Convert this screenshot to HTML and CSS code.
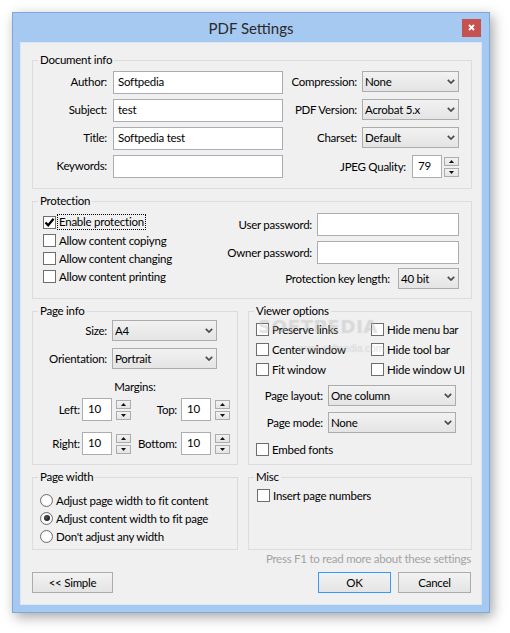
FILE: index.html
```html
<!DOCTYPE html>
<html>
<head>
<meta charset="utf-8">
<title>PDF Settings</title>
<link rel="stylesheet" href="styles.css">
</head>
<body>
<div class="window">
  <div class="titlebar">
    <span class="title">PDF Settings</span>
    <span class="close"><svg width="7" height="7" viewBox="0 0 7 7"><path d="M1 1 L6 6 M6 1 L1 6" stroke="#fff" stroke-width="1.8" fill="none"/></svg></span>
  </div>
  <div class="client">
    <fieldset class="group">
      <legend>Document info</legend>
      <div class="doc-grid">
        <span class="lbl">Author:</span>
        <div class="input">Softpedia</div>
        <span class="lbl lbl-r">Compression:</span>
        <div class="combo"><span>None</span><svg class="arrow" width="8" height="5" viewBox="0 0 8 5"><path d="M0.8 0.8 L4 4 L7.2 0.8" stroke="#4a4a4a" stroke-width="1.7" fill="none"/></svg></div>

        <span class="lbl">Subject:</span>
        <div class="input">test</div>
        <span class="lbl lbl-r">PDF Version:</span>
        <div class="combo"><span>Acrobat 5.x</span><svg class="arrow" width="8" height="5" viewBox="0 0 8 5"><path d="M0.8 0.8 L4 4 L7.2 0.8" stroke="#4a4a4a" stroke-width="1.7" fill="none"/></svg></div>

        <span class="lbl">Title:</span>
        <div class="input">Softpedia test</div>
        <span class="lbl lbl-r">Charset:</span>
        <div class="combo"><span>Default</span><svg class="arrow" width="8" height="5" viewBox="0 0 8 5"><path d="M0.8 0.8 L4 4 L7.2 0.8" stroke="#4a4a4a" stroke-width="1.7" fill="none"/></svg></div>

        <span class="lbl">Keywords:</span>
        <div class="input"></div>
        <div class="jpeg">
          <span class="jpeg-lbl">JPEG Quality:</span>
          <div class="input num">79</div>
          <div class="spin">
            <span class="sb"><svg width="5" height="3" viewBox="0 0 5 3"><path d="M0 3 L2.5 0 L5 3 Z" fill="#111"/></svg></span>
            <span class="sb"><svg width="5" height="3" viewBox="0 0 5 3"><path d="M0 0 L5 0 L2.5 3 Z" fill="#111"/></svg></span>
          </div>
        </div>
      </div>
    </fieldset>

    <fieldset class="group gap4">
      <legend>Protection</legend>
      <div class="prot-body">
        <div class="checks">
          <div class="crow"><span class="cb"><svg width="11" height="11" viewBox="0 0 11 11"><path d="M1.5 5.5 L4.2 8.3 L9.6 1.8" stroke="#000" stroke-width="2.2" fill="none"/></svg></span><span class="ctext focus">Enable protection</span></div>
          <div class="crow"><span class="cb"></span><span class="ctext">Allow content copiyng</span></div>
          <div class="crow"><span class="cb"></span><span class="ctext">Allow content changing</span></div>
          <div class="crow"><span class="cb"></span><span class="ctext">Allow content printing</span></div>
        </div>
        <div class="pw">
          <div class="pw-row"><span class="pw-lbl">User password:</span><div class="input pwin"></div></div>
          <div class="pw-row"><span class="pw-lbl">Owner password:</span><div class="input pwin"></div></div>
          <div class="pw-row key"><span class="key-lbl">Protection key length:</span><div class="combo keycombo"><span>40 bit</span><svg class="arrow" width="8" height="5" viewBox="0 0 8 5"><path d="M0.8 0.8 L4 4 L7.2 0.8" stroke="#4a4a4a" stroke-width="1.7" fill="none"/></svg></div></div>
        </div>
      </div>
    </fieldset>

    <div class="row gap4">
      <fieldset class="group pageinfo">
        <legend>Page info</legend>
        <div class="pi-body">
          <div class="pi-grid">
            <span class="lbl pi-lbl">Size:</span>
            <div class="combo"><span>A4</span><svg class="arrow" width="8" height="5" viewBox="0 0 8 5"><path d="M0.8 0.8 L4 4 L7.2 0.8" stroke="#4a4a4a" stroke-width="1.7" fill="none"/></svg></div>
            <span class="lbl pi-lbl">Orientation:</span>
            <div class="combo"><span>Portrait</span><svg class="arrow" width="8" height="5" viewBox="0 0 8 5"><path d="M0.8 0.8 L4 4 L7.2 0.8" stroke="#4a4a4a" stroke-width="1.7" fill="none"/></svg></div>
          </div>
          <div class="margins-title">Margins:</div>
          <div class="mg">
            <span class="mg-lbl">Left:</span>
            <div class="input num">10</div>
            <div class="spin mg-spin">
              <span class="sb"><svg width="5" height="3" viewBox="0 0 5 3"><path d="M0 3 L2.5 0 L5 3 Z" fill="#111"/></svg></span>
              <span class="sb"><svg width="5" height="3" viewBox="0 0 5 3"><path d="M0 0 L5 0 L2.5 3 Z" fill="#111"/></svg></span>
            </div>
            <span class="mg-lbl mg-lbl2">Top:</span>
            <div class="input num">10</div>
            <div class="spin mg-spin">
              <span class="sb"><svg width="5" height="3" viewBox="0 0 5 3"><path d="M0 3 L2.5 0 L5 3 Z" fill="#111"/></svg></span>
              <span class="sb"><svg width="5" height="3" viewBox="0 0 5 3"><path d="M0 0 L5 0 L2.5 3 Z" fill="#111"/></svg></span>
            </div>

            <span class="mg-lbl">Right:</span>
            <div class="input num">10</div>
            <div class="spin mg-spin">
              <span class="sb"><svg width="5" height="3" viewBox="0 0 5 3"><path d="M0 3 L2.5 0 L5 3 Z" fill="#111"/></svg></span>
              <span class="sb"><svg width="5" height="3" viewBox="0 0 5 3"><path d="M0 0 L5 0 L2.5 3 Z" fill="#111"/></svg></span>
            </div>
            <span class="mg-lbl mg-lbl2">Bottom:</span>
            <div class="input num">10</div>
            <div class="spin mg-spin">
              <span class="sb"><svg width="5" height="3" viewBox="0 0 5 3"><path d="M0 3 L2.5 0 L5 3 Z" fill="#111"/></svg></span>
              <span class="sb"><svg width="5" height="3" viewBox="0 0 5 3"><path d="M0 0 L5 0 L2.5 3 Z" fill="#111"/></svg></span>
            </div>
          </div>
        </div>
      </fieldset>

      <fieldset class="group viewer">
        <legend>Viewer options</legend>
        <div class="vo-body">
          <div class="vo-grid">
            <div class="vrow"><span class="cb"></span><span class="ctext">Preserve links</span></div>
            <div class="vrow"><span class="cb"></span><span class="ctext">Hide menu bar</span></div>
            <div class="vrow"><span class="cb"></span><span class="ctext">Center window</span></div>
            <div class="vrow"><span class="cb"></span><span class="ctext">Hide tool bar</span></div>
            <div class="vrow"><span class="cb"></span><span class="ctext">Fit window</span></div>
            <div class="vrow"><span class="cb"></span><span class="ctext">Hide window UI</span></div>
          </div>
          <div class="vo-sel">
            <span class="lbl vo-lbl">Page layout:</span>
            <div class="combo"><span>One column</span><svg class="arrow" width="8" height="5" viewBox="0 0 8 5"><path d="M0.8 0.8 L4 4 L7.2 0.8" stroke="#4a4a4a" stroke-width="1.7" fill="none"/></svg></div>
            <span class="lbl vo-lbl">Page mode:</span>
            <div class="combo"><span>None</span><svg class="arrow" width="8" height="5" viewBox="0 0 8 5"><path d="M0.8 0.8 L4 4 L7.2 0.8" stroke="#4a4a4a" stroke-width="1.7" fill="none"/></svg></div>
          </div>
          <div class="vrow embed"><span class="cb"></span><span class="ctext">Embed fonts</span></div>
        </div>
        <div class="wm">SOFTPEDIA<span class="wm-url">www.softpedia.com</span></div>
      </fieldset>
    </div>

    <div class="row gap4">
      <fieldset class="group pageinfo">
        <legend>Page width</legend>
        <div class="pw-body">
          <div class="crow"><span class="rb"></span><span class="ctext">Adjust page width to fit content</span></div>
          <div class="crow"><span class="rb on"></span><span class="ctext">Adjust content width to fit page</span></div>
          <div class="crow"><span class="rb"></span><span class="ctext">Don't adjust any width</span></div>
        </div>
      </fieldset>
      <fieldset class="group viewer">
        <legend>Misc</legend>
        <div class="misc-body">
          <div class="crow"><span class="cb"></span><span class="ctext">Insert page numbers</span></div>
        </div>
      </fieldset>
    </div>

    <div class="hint">Press F1 to read more about these settings</div>

    <div class="buttons">
      <div class="btn simple">&lt;&lt; Simple</div>
      <div class="btn-group">
        <div class="btn ok">OK</div>
        <div class="btn">Cancel</div>
      </div>
    </div>
  </div>
</div>
</body>
</html>
```
FILE: styles.css
```css
* { box-sizing: border-box; }
html, body { margin: 0; padding: 0; }
body {
  width: 510px;
  height: 633px;
  overflow: hidden;
  background: #ffffff;
  font-family: Lato, "Noto Sans", sans-serif;
  font-size: 11.5px;
  letter-spacing: -0.25px;
  color: #000;
}
.window {
  margin: 12px 0 0 12px;
  width: 478px;
  height: 601px;
  border: 1px solid #7ea8da;
  background: #a5c9f1;
  box-shadow: 3px 4px 12px rgba(0, 0, 0, 0.35);
}
.titlebar {
  height: 29px;
  display: grid;
  grid-template-columns: 1fr auto 1fr;
  align-items: center;
}
.title {
  grid-column: 2;
  font-size: 15px;
  letter-spacing: 0;
  color: #2a2a2a;
  line-height: 20px;
  padding-top: 1px;
}
.close {
  grid-column: 3;
  justify-self: end;
  margin-right: 8px;
  width: 19px;
  height: 18px;
  background: #c75050;
  display: flex;
  align-items: center;
  justify-content: center;
}
.client {
  margin: 0 7px;
  width: 462px;
  height: 563px;
  background: #f0f0f0;
  padding: 10px 10px 12px 12px;
  box-shadow: inset 0 0 0 1px #dbe6f2;
}
fieldset.group {
  margin: 0;
  padding: 0;
  border: 1px solid #dcdcdc;
  min-width: 0;
}
.client > .gap { margin-top: 3px; }
.client > .gap4 { margin-top: 4px; }
legend {
  margin-left: 5px;
  padding: 0 2px;
  line-height: 16px;
}

.lbl {
  text-align: right;
  padding-right: 6px;
  line-height: 21px;
  height: 21px;
  white-space: nowrap;
}
.lbl-r { padding-right: 5px; }

.input {
  height: 23px;
  border: 1px solid #abadb3;
  background: #fff;
  padding: 0 0 2px 4px;
  line-height: 19px;
  white-space: nowrap;
}
.num { width: 30px; padding-left: 5px; }

.combo {
  height: 21px;
  border: 1px solid #acacac;
  background: linear-gradient(#f2f2f2, #e4e4e4);
  display: flex;
  align-items: center;
  padding-left: 2px;
  white-space: nowrap;
}
.combo .arrow { margin-left: auto; margin-right: 3px; flex: none; }

.spin {
  display: flex;
  flex-direction: column;
  gap: 2px;
  width: 15px;
}
.sb {
  width: 15px;
  height: 9px;
  border: 1px solid #acacac;
  background: linear-gradient(#f2f2f2, #e4e4e4);
  display: flex;
  align-items: center;
  justify-content: center;
}

/* document info */
.doc-grid {
  display: grid;
  grid-template-columns: 80px 170px 79px 97px;
  grid-auto-rows: 23px;
  row-gap: 5px;
  align-items: start;
  padding: 3px 12px 10px 0;
}
.jpeg {
  grid-column: 3 / span 2;
  display: flex;
  justify-content: flex-end;
  align-items: center;
  height: 23px;
}
.jpeg-lbl { margin-right: 6px; }
.jpeg .spin { margin-left: 2px; }

/* checkbox & radio */
.crow, .vrow {
  display: flex;
  align-items: center;
  height: 18px;
}
.vrow { height: 20px; }
.cb {
  width: 13px;
  height: 13px;
  flex: none;
  border: 1px solid #6e6e6e;
  background: #fff;
  display: flex;
  align-items: center;
  justify-content: center;
}
.ctext { margin-left: 3px; white-space: nowrap; }
.focus {
  margin-left: 2px;
  padding: 0 1px;
  line-height: 14px;
  outline: 1px dotted #000;
}
.rb {
  width: 13px;
  height: 13px;
  flex: none;
  border: 1px solid #6e6e6e;
  border-radius: 50%;
  background: radial-gradient(circle, #ffffff 40%, #e8e8e8 100%);
  display: flex;
  align-items: center;
  justify-content: center;
}
.rb.on::after {
  content: "";
  width: 6px;
  height: 6px;
  border-radius: 50%;
  background: radial-gradient(circle at 40% 40%, #555 0%, #1a1a1a 70%);
}

/* protection */
.prot-body {
  display: flex;
  justify-content: space-between;
  padding: 4px 12px 9px 10px;
}
.checks { display: flex; flex-direction: column; }
.pw {
  display: flex;
  flex-direction: column;
  align-items: flex-end;
  gap: 5px;
}
.pw-row { display: flex; align-items: center; }
.pw-lbl { margin-right: 5px; }
.pwin { width: 142px; }
.pw-row.key { margin-top: -1px; }
.key-lbl { margin-right: 8px; }
.keycombo { width: 61px; }

/* rows of groups */
.row { display: flex; gap: 10px; }
.pageinfo { width: 206px; }
.viewer { width: 224px; position: relative; }

.pi-body { padding: 1px 0 9px 0; }
.pi-grid {
  display: grid;
  grid-template-columns: 79px 105px;
  row-gap: 7px;
}
.pi-lbl { padding-right: 5px; }
.margins-title {
  margin-top: 10px;
  line-height: 16px;
  text-align: center;
}
.mg {
  margin-top: 3px;
  display: grid;
  grid-template-columns: 49px 30px 19px 50px 30px 19px;
  grid-auto-rows: 23px;
  row-gap: 11px;
  align-items: center;
}
.mg-lbl { text-align: right; padding-right: 2px; white-space: nowrap; }
.mg-lbl2 { padding-right: 4px; }
.mg-spin { margin-left: 4px; }

.vo-body { padding: 0 0 0 7px; }
.vo-grid {
  display: grid;
  grid-template-columns: 115px auto;
}
.vo-sel {
  display: grid;
  grid-template-columns: 72px 128px;
  row-gap: 6px;
  margin-top: 6px;
}
.vo-lbl { padding-right: 5px; }
.embed { margin-top: 6px; }

.wm {
  position: absolute;
  left: 9px;
  top: -1px;
  font-family: "DejaVu Sans", sans-serif;
  font-size: 18px;
  font-weight: bold;
  letter-spacing: 0.7px;
  color: rgba(255, 255, 255, 0.3);
  text-shadow: 0 0 1px rgba(0, 0, 0, 0.16);
  line-height: 18px;
}
.wm-url {
  display: block;
  font-family: "Liberation Sans", sans-serif;
  font-size: 10px;
  font-weight: normal;
  letter-spacing: 0;
  line-height: 12px;
  margin: 7px 0 0 40px;
}

.pw-body { padding: 6px 0 4px 7px; }
.misc-body { padding: 1px 0 0 8px; }

.hint {
  margin-top: 1px;
  line-height: 16px;
  text-align: right;
  color: #a3a3a3;
  padding-right: 1px;
}

.buttons {
  margin-top: 5px;
  display: flex;
}
.btn {
  height: 21px;
  width: 73px;
  border: 1px solid #acacac;
  background: linear-gradient(#f2f2f2, #e4e4e4);
  display: flex;
  align-items: center;
  justify-content: center;
}
.btn.simple { width: 81px; }
.btn.ok { border-color: #3399ff; }
.btn-group {
  margin-left: auto;
  margin-right: 1px;
  display: flex;
  gap: 7px;
}
```
